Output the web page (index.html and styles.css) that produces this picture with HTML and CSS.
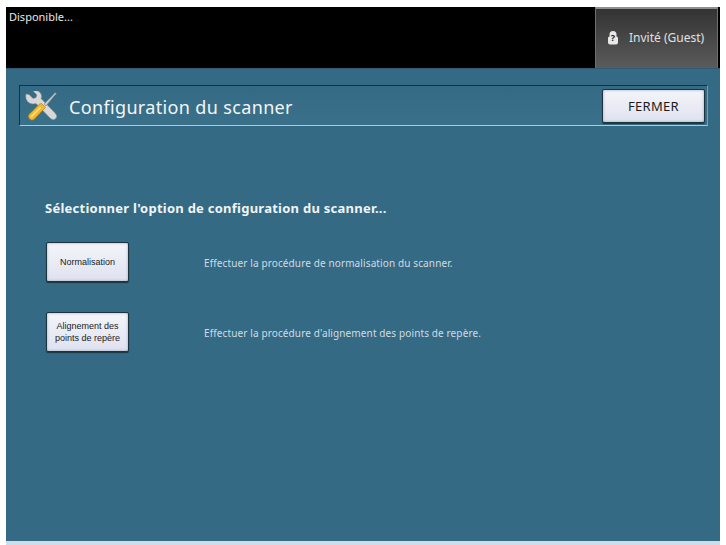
FILE: index.html
```html
<!DOCTYPE html>
<html lang="fr">
<head>
<meta charset="utf-8">
<title>Configuration du scanner</title>
<link rel="stylesheet" href="styles.css">
</head>
<body>
<div class="screen">
  <header class="top">
    <div class="status">Disponible...</div>
    <div class="user">
      <svg class="lock" viewBox="0 0 12 14" width="12" height="15"><path d="M2.500 6V4a3.500 3.500 0 0 1 7 0v2q1.500 0 1.500 1.500V12q0 2-2 2H3q-2 0-2-2V7.500Q1 6 2.500 6z" fill="#e8e8e8"/><text x="6" y="10.500" class="q">?</text></svg>
      <span>Invité (Guest)</span>
    </div>
  </header>
  <main class="panel">
    <div class="titlebar">
      <svg class="tools" viewBox="0 0 34 30" width="34" height="30">
        <path d="M4 3.500l4 4 3-.8.800-3L8 0q6-1.500 8 3 1 2.500 0 4.500L30 22q3 3 .8 5.500-2.800 2.500-5.500-.3L11 12.500Q5.500 14 2.500 10.500 0 7.500 1 3z" fill="#d8d8d8" stroke="#8a8a8a" stroke-width=".5"/>
        <path d="M19 13L28.500 3.500l1.500-2 1.500 1.500-2 1.500L21 15z" fill="#c8c8c8" stroke="#6d7a80" stroke-width=".5"/>
        <path d="M16.500 12.500l4 4-2 2L9 28.500q-2.500 1.500-4.500-.5-2-2.500-.5-4.500L14.500 13z" fill="#f2b92a" stroke="#a87c10" stroke-width=".6"/>
        <path d="M6 26L15.500 16.500" stroke="#fbe08a" stroke-width="1.500"/>
      </svg>
      <h1>Configuration du scanner</h1>
      <button class="btn close">FERMER</button>
    </div>
    <h2>Sélectionner l'option de configuration du scanner...</h2>
    <div class="option first">
      <button class="btn small">Normalisation</button>
      <p>Effectuer la procédure de normalisation du scanner.</p>
    </div>
    <div class="option">
      <button class="btn small">Alignement des<br>points de repère</button>
      <p>Effectuer la procédure d'alignement des points de repère.</p>
    </div>
  </main>
</div>
</body>
</html>
```
FILE: styles.css
```css
html, body { margin: 0; padding: 0; background: #fff; }
body { width: 726px; height: 545px; overflow: hidden; font-family: "Noto Sans", sans-serif; }
.screen { box-sizing: border-box; width: 720px; height: 545px; padding: 7px 0 0 6px; display: flex; flex-direction: column; }
.top { height: 61px; background: #000; display: flex; flex: none; padding-right: 2px; }
.status { flex: 1; color: #e8e8e8; font-size: 11px; line-height: 14px; padding: 3px 0 0 3px; }
.user { box-sizing: border-box; width: 123px; display: flex; align-items: center; gap: 10px; padding: 0 0 2px 11px; color: #e0e0e0; font-size: 12px; background: linear-gradient(#333, #5a5a5a); border: 1px solid #6f6f6f; border-top: 2px solid #8f8f8f; border-bottom: 1px solid #5c5c5c; }
.lock { flex: none; }
.q { font: bold 9px "Noto Sans", sans-serif; fill: #222; text-anchor: middle; }
.panel { flex: 1; background: #356a85; border-top: 1px solid #2c5a72; border-bottom: 4px solid #cfdde6; padding: 16px 12px 0 13px; }
.titlebar { height: 41px; box-sizing: border-box; border: 1px solid #15303f; border-bottom: 1px solid #b4c8d2; border-right: 1px solid #7f9cab; display: flex; align-items: center; padding: 0 2px 0 5px; background: linear-gradient(#356a85, #3a7089); }
.tools { flex: none; }
h1 { flex: 1; margin: 2px 0 0 10px; font-size: 18px; font-weight: 400; color: #f2f6f8; letter-spacing: .35px; }
.btn { font-family: "Liberation Sans", sans-serif; color: #1a1a1a; background: linear-gradient(#f4f5fa, #dfe2ef); border: 1px solid #1c3442; border-radius: 2px; box-shadow: inset 0 0 3px #9da6b8, 0 1px 1px #1c3442; padding: 0; }
.close { width: 103px; height: 34px; font-family: "Noto Sans", sans-serif; font-size: 13px; letter-spacing: .3px; }
h2 { margin: 73px 0 0 26px; font-size: 13px; font-weight: 700; line-height: 18px; color: #f0f4f6; letter-spacing: .25px; }
.option { display: flex; align-items: center; margin: 30px 0 0 27px; }
.option.first { margin-top: 25px; }
.small { flex: none; width: 83px; height: 40px; font-size: 9px; line-height: 12px; }
.option p { margin: 1px 0 0 75px; font-size: 10px; color: #d0dce2; letter-spacing: .12px; }
```
